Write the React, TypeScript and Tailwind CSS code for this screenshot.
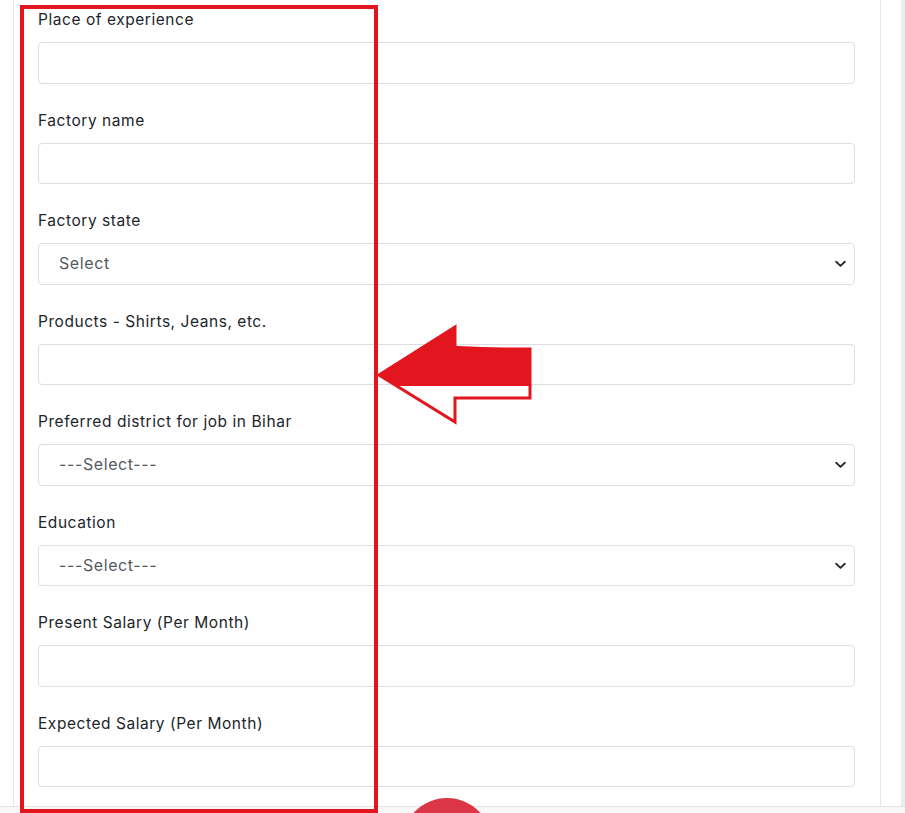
import React from "react";

type Field = { label: string; kind: "input" | "select"; placeholder?: string };

const fields: Field[] = [
  { label: "Place of experience", kind: "input" },
  { label: "Factory name", kind: "input" },
  { label: "Factory state", kind: "select", placeholder: "Select" },
  { label: "Products - Shirts, Jeans, etc.", kind: "input" },
  { label: "Preferred district for job in Bihar", kind: "select", placeholder: "---Select---" },
  { label: "Education", kind: "select", placeholder: "---Select---" },
  { label: "Present Salary (Per Month)", kind: "input" },
  { label: "Expected Salary (Per Month)", kind: "input" },
];

function Chevron() {
  return (
    <svg width="11" height="7" viewBox="0 0 11 7" className="absolute right-[8px] top-1/2 -translate-y-1/2">
      <path d="M1.2 1.2 L5.5 5.4 L9.8 1.2" fill="none" stroke="#2b2b2b" strokeWidth="1.9" strokeLinecap="round" strokeLinejoin="round" />
    </svg>
  );
}

function FieldRow({ f }: { f: Field }) {
  return (
    <div className="flex flex-col h-[100.57px]">
      <div className="h-[24px] leading-[24px] pt-[2px] text-[15.5px] text-[#212529] tracking-[0.55px]">{f.label}</div>
      <div className="relative mt-[12px] h-[41.5px] rounded-[4px] border border-[#dedede] bg-white">
        {f.kind === "select" && (
          <>
            <div className="pl-[20px] leading-[39.5px] text-[16px] tracking-[0.6px] text-[#555a5f]">{f.placeholder}</div>
            <Chevron />
          </>
        )}
      </div>
    </div>
  );
}

export default function App() {
  return (
    <div
      className="relative w-[905px] h-[813px] overflow-hidden bg-white"
      style={{ fontFamily: "Inter, 'Noto Sans', sans-serif" }}
    >
      <div className="flex h-full">
        <div className="ml-[13px] w-[868px] h-full border-x border-[#e8e8e8] pl-[24px] pr-[25px] pt-[6px]">
          {fields.map((f) => (
            <FieldRow key={f.label} f={f} />
          ))}
        </div>
        <div className="ml-auto w-[4px] h-full bg-[#ececec]" />
      </div>

      {/* bottom bar */}
      <div className="absolute left-0 right-0 bottom-0 h-[7px] border-t border-[#e4e4e4] bg-[#f8f8f8]" />
      <div className="absolute left-[402px] top-[798px] w-[90px] h-[90px] rounded-full bg-[#dc3545]" />

      {/* annotation rectangle */}
      <div className="absolute left-[20px] top-[5px] w-[358px] h-[808px] border-[4px] border-[#e3161f]" />

      {/* annotation arrow */}
      <svg className="absolute left-0 top-0" width="905" height="813" viewBox="0 0 905 813">
        <polygon
          points="379,375 436,345 530,349 530,386 397,386"
          fill="#e3161f"
        />
        <polygon
          points="379,375 455,327 455,349 530,349 530,398 455,398 455,422"
          fill="none"
          stroke="#e3161f"
          strokeWidth="3"
          strokeLinejoin="miter"
        />
        <polygon points="379,375 455,327 455,349 436,349" fill="#e3161f" />
      </svg>
    </div>
  );
}
